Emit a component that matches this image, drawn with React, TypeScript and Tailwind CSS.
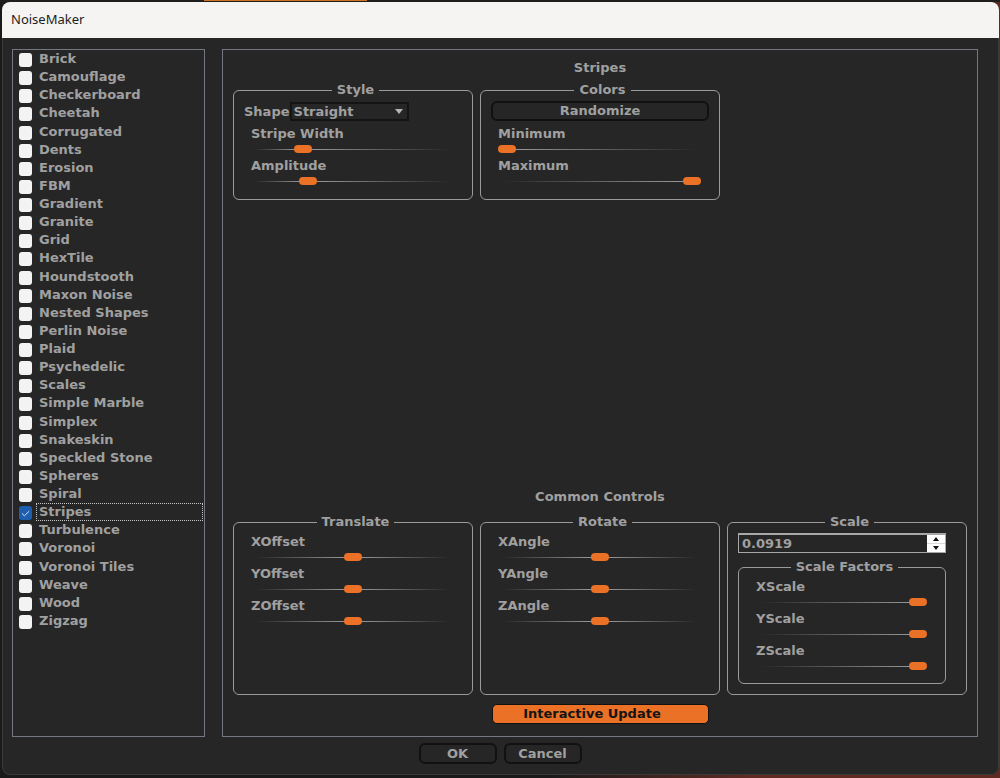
import { useState } from 'react';
import type { CSSProperties, ReactNode } from 'react';

const NOISES = [
  'Brick', 'Camouflage', 'Checkerboard', 'Cheetah', 'Corrugated', 'Dents', 'Erosion', 'FBM',
  'Gradient', 'Granite', 'Grid', 'HexTile', 'Houndstooth', 'Maxon Noise', 'Nested Shapes',
  'Perlin Noise', 'Plaid', 'Psychedelic', 'Scales', 'Simple Marble', 'Simplex', 'Snakeskin',
  'Speckled Stone', 'Spheres', 'Spiral', 'Stripes', 'Turbulence', 'Voronoi', 'Voronoi Tiles',
  'Weave', 'Wood', 'Zigzag',
];

interface GroupProps {
  title: string;
  className?: string;
  children: ReactNode;
}

function Group({ title, className = '', children }: GroupProps) {
  return (
    <fieldset className={`min-w-0 rounded-md border border-[#9a9a9a] pl-[5px] ${className}`}>
      <legend className="mx-auto px-[5px] leading-4">{title}</legend>
      {children}
    </fieldset>
  );
}

interface SliderProps {
  label: string;
  initial: number;
}

function Slider({ label, initial }: SliderProps) {
  const [value, setValue] = useState(initial);
  // the track is brightest next to the thumb and fades out at both ends
  const track: CSSProperties = {
    backgroundImage: `linear-gradient(to right, transparent, #a0a0a0 ${value}%, transparent)`,
  };

  return (
    <label className="block pr-[18px] pl-3">
      <span className="block h-5 leading-5">{label}</span>
      <span className="flex h-3 items-start bg-[length:calc(100%-8px)_1px] bg-[position:center_5px] bg-no-repeat" style={track}>
        <input
          type="range"
          min={0}
          max={100}
          value={value}
          onChange={(e) => setValue(Number(e.target.value))}
          className="block h-[10px] w-full appearance-none bg-transparent outline-none [&::-webkit-slider-thumb]:h-2 [&::-webkit-slider-thumb]:w-[18px] [&::-webkit-slider-thumb]:appearance-none [&::-webkit-slider-thumb]:rounded [&::-webkit-slider-thumb]:bg-[#ea7125]"
        />
      </span>
    </label>
  );
}

function NoiseList() {
  const [selected, setSelected] = useState('Stripes');

  return (
    <div className="w-[193px] shrink-0 border border-[#747981]">
      <ul className="grid h-[580px] auto-rows-fr">
        {NOISES.map((name) => (
          <li key={name}>
            <label className="flex h-full items-center gap-1 pr-px pl-1.5">
              <span className="grid pt-0.5">
                <input
                  type="checkbox"
                  checked={selected === name}
                  onChange={() => setSelected(name)}
                  className="col-start-1 row-start-1 h-[14px] w-[13px] appearance-none rounded-[3px] bg-[#f3f3f3] checked:bg-[#1d5fae]"
                />
                {selected === name && (
                  <svg viewBox="0 0 13 14" className="pointer-events-none col-start-1 row-start-1 h-[14px] w-[13px]">
                    <path d="M3 7.5l2.4 2.3 4.8-4.6" fill="none" stroke="#d5e4f5" strokeWidth="1" />
                  </svg>
                )}
              </span>
              <span
                className={`h-full flex-1 border border-dotted pl-0.5 leading-4 ${
                  selected === name ? 'border-[#c8c8c8]' : 'border-transparent'
                }`}
              >
                {name}
              </span>
            </label>
          </li>
        ))}
      </ul>
    </div>
  );
}

function ScaleInput() {
  const [scale, setScale] = useState('0.0919');
  const step = (delta: number) => setScale((Number(scale) + delta).toFixed(4));

  return (
    <div className="flex h-5 border border-t-2 border-[#a8a8a8]">
      <input
        type="text"
        aria-label="Scale"
        value={scale}
        onChange={(e) => setScale(e.target.value)}
        className="min-w-0 flex-1 bg-transparent pl-[3px] outline-none"
      />
      <div className="flex w-[18px] flex-col gap-px bg-[#d8d8d8]">
        <button type="button" aria-label="Increase scale" onClick={() => step(0.01)} className="grid flex-1 place-items-center bg-white">
          <svg viewBox="0 0 6 4" className="h-1 w-1.5"><path d="M0 4L3 0L6 4Z" fill="#111" /></svg>
        </button>
        <button type="button" aria-label="Decrease scale" onClick={() => step(-0.01)} className="grid flex-1 place-items-center bg-white">
          <svg viewBox="0 0 6 4" className="h-1 w-1.5"><path d="M0 0L3 4L6 0Z" fill="#111" /></svg>
        </button>
      </div>
    </div>
  );
}

export default function App() {
  const [interactive, setInteractive] = useState(true);

  return (
    <div className="flex min-h-screen flex-col bg-[#171515] bg-linear-to-r from-[#1b1a1a] from-55% to-[#5e2a22] to-75% pr-px pb-[3px] pl-0.5 font-['DejaVu_Sans','Verdana',sans-serif] text-[13px] font-bold text-[#a0a0a0]">
      <div className="-mr-px -ml-0.5 h-0.5 shrink-0 bg-[#1f1e1e] px-[20%]">
        <div className="ml-[5px] h-px w-[27%] bg-[#cf7420]" />
      </div>
      <div className="flex flex-1 flex-col overflow-hidden rounded-lg bg-[#262626]">
        <header className="flex h-9 shrink-0 items-center bg-[#f5f4f3] px-[9px] font-['Noto_Sans',sans-serif] text-[13px] font-normal text-[#1c1c1c]">
          <h1>NoiseMaker</h1>
        </header>

        <main className="flex flex-1 rounded-b-lg border-x border-b border-[#3a3a3a] pt-[11px] pr-5 pl-[9px]">
          <div className="flex flex-1 flex-col">
            <div className="flex flex-1 gap-[17px]">
              <NoiseList />

              <div className="flex min-w-0 flex-1 flex-col border border-[#747981] px-2.5 pt-2.5 pb-3">
                <h2 className="text-center leading-4">Stripes</h2>
                <div className="mt-1.5 grid grid-cols-3 gap-[7px]">
                  <Group title="Style" className="pt-1 pb-[11px]">
                    <div className="mb-[3px] flex h-[19px] items-center pl-[5px]">
                      <label htmlFor="shape">Shape</label>
                      <div className="grid h-full w-[119px] items-center border-2 border-[#141414]">
                        <select id="shape" className="col-start-1 row-start-1 appearance-none bg-transparent pl-0.5 leading-[15px] outline-none">
                          <option>Straight</option>
                        </select>
                        <svg viewBox="0 0 8 5" className="pointer-events-none col-start-1 row-start-1 mr-1 h-[5px] w-2 justify-self-end">
                          <path d="M0 0H8L4 5Z" fill="#b4b4b4" />
                        </svg>
                      </div>
                    </div>
                    <Slider label="Stripe Width" initial={23} />
                    <Slider label="Amplitude" initial={26} />
                  </Group>
                  <Group title="Colors" className="pt-[3px] pb-[11px]">
                    <div className="mb-[3px] pr-2.5 pl-[5px]">
                      <button type="button" className="block h-5 w-full rounded-md border-2 border-[#111] leading-4">
                        Randomize
                      </button>
                    </div>
                    <Slider label="Minimum" initial={0} />
                    <Slider label="Maximum" initial={100} />
                  </Group>
                </div>

                <h2 className="mt-auto text-center leading-4">Common Controls</h2>
                <div className="mt-[9px] grid grid-cols-3 gap-[7px]">
                  <Group title="Translate" className="pt-0.5">
                    <Slider label="XOffset" initial={50} />
                    <Slider label="YOffset" initial={50} />
                    <Slider label="ZOffset" initial={50} />
                  </Group>
                  <Group title="Rotate" className="pt-0.5">
                    <Slider label="XAngle" initial={50} />
                    <Slider label="YAngle" initial={50} />
                    <Slider label="ZAngle" initial={50} />
                  </Group>
                  <Group title="Scale" className="pt-[3px] pb-2.5">
                    <div className="flex flex-col gap-1.5 pr-5 pl-[5px]">
                      <ScaleInput />
                      <Group title="Scale Factors" className="pt-0.5 pb-2.5">
                        <Slider label="XScale" initial={100} />
                        <Slider label="YScale" initial={100} />
                        <Slider label="ZScale" initial={100} />
                      </Group>
                    </div>
                  </Group>
                </div>

                <button
                  type="button"
                  aria-pressed={interactive}
                  onClick={() => setInteractive(!interactive)}
                  className={`mx-auto mt-[9px] h-5 w-[217px] rounded-[5px] border border-[#111] pr-4 leading-4 ${
                    interactive ? 'bg-[#ea7125] text-[#141414]' : ''
                  }`}
                >
                  Interactive Update
                </button>
              </div>
            </div>

            <footer className="flex justify-center gap-[7px] pt-1.5 pb-2.5 pl-2.5">
              <button type="button" className="h-[21px] w-[78px] rounded-md border-2 border-[#111] leading-4">OK</button>
              <button type="button" className="h-[21px] w-[78px] rounded-md border-2 border-[#111] leading-4">Cancel</button>
            </footer>
          </div>
        </main>
      </div>
    </div>
  );
}
